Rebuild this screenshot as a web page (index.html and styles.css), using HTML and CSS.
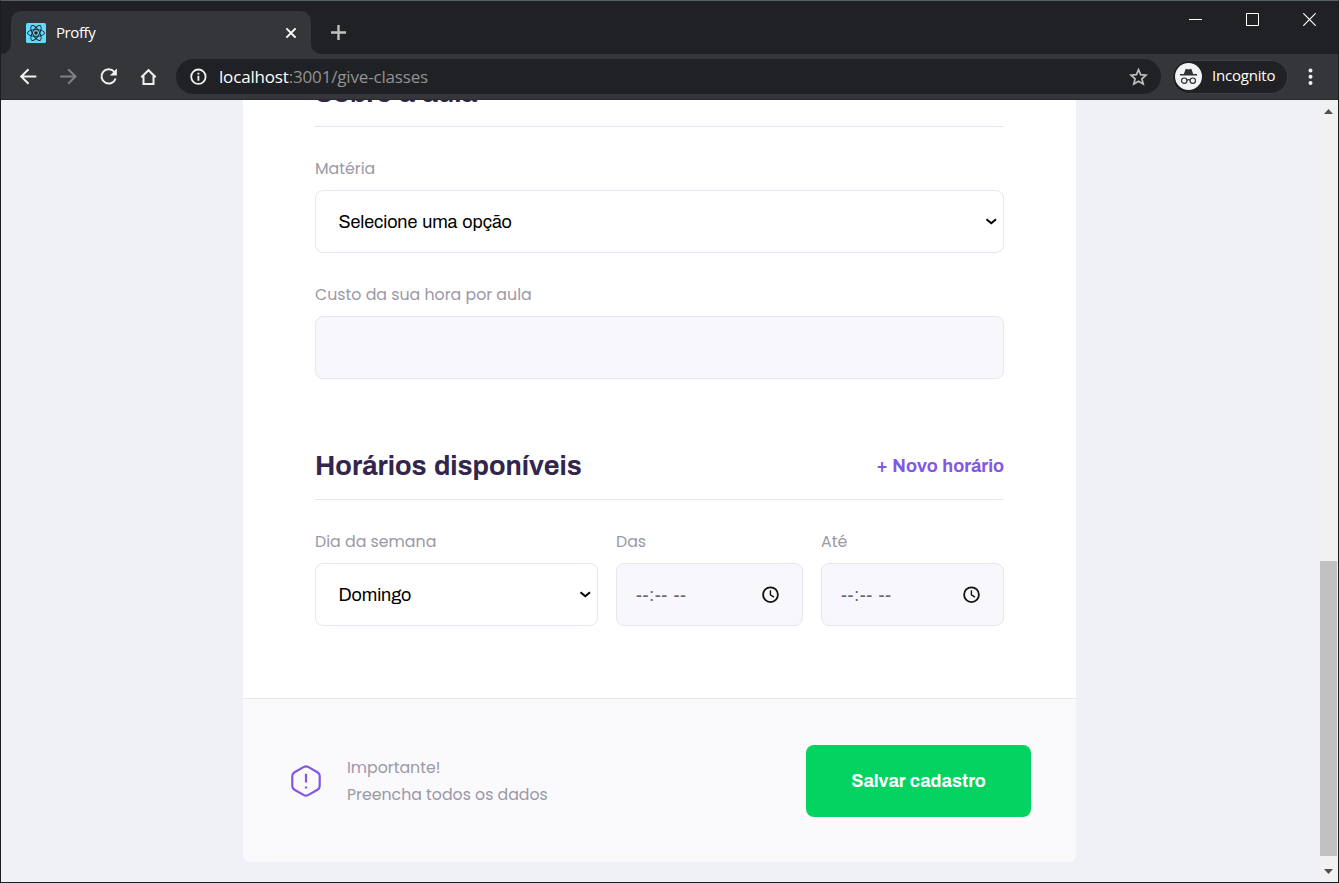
FILE: index.html
```html
<!DOCTYPE html>
<html lang="pt-BR">
<head>
<meta charset="utf-8">
<title>Proffy</title>
<link rel="stylesheet" href="styles.css">
</head>
<body>
<div class="window">
  <header class="titlebar">
    <div class="tab-foot"><i></i></div>
    <div class="tab">
      <svg class="favicon" width="20" height="20" viewBox="0 0 20 20"><rect width="20" height="20" rx="1.5" fill="#61dafb"/><g fill="none" stroke="#20232a" stroke-width=".9"><ellipse cx="10" cy="10" rx="8.5" ry="3.4"/><ellipse cx="10" cy="10" rx="8.5" ry="3.4" transform="rotate(60 10 10)"/><ellipse cx="10" cy="10" rx="8.5" ry="3.4" transform="rotate(120 10 10)"/></g><circle cx="10" cy="10" r="1.8" fill="#20232a"/></svg>
      <span class="tab-title">Proffy</span>
      <svg class="tab-close" width="12" height="12" viewBox="0 0 12 12"><path d="M1.4 1.4l9.2 9.2M10.6 1.4l-9.2 9.2" stroke="#fff" stroke-width="2"/></svg>
    </div>
    <div class="tab-foot right"><i></i></div>
    <svg class="new-tab" width="15" height="15" viewBox="0 0 15 15"><path d="M7.5 0v15M0 7.5h15" stroke="#bfc0c1" stroke-width="2.4"/></svg>
    <div class="win-controls">
      <svg width="13" height="13" viewBox="0 0 13 13"><path d="M0 6.5h13" stroke="#fff"/></svg>
      <svg width="13" height="13" viewBox="0 0 13 13"><path d="M.5.5h12v12H.5z" fill="none" stroke="#fff"/></svg>
      <svg width="13" height="13" viewBox="0 0 13 13"><path d="M.3.3l12.4 12.4M12.7.3L.3 12.7" stroke="#fff" stroke-width="1.2"/></svg>
    </div>
  </header>
  <div class="toolbar">
    <div class="nav">
      <svg width="20" height="20" viewBox="0 0 20 20" fill="none" stroke="#f1f1f2" stroke-width="2"><path d="M18.3 9.5H3.5M10.5 2.2L3.2 9.5l7.3 7.3"/></svg>
      <svg width="20" height="20" viewBox="0 0 20 20" fill="none" stroke="#808184" stroke-width="2"><path d="M2.2 9.5H17M10.2 2.2l7.3 7.3-7.3 7.3"/></svg>
      <svg width="20" height="20" viewBox="0 0 20 20" fill="none"><path d="M16.2 4.7A7.2 7.2 0 1 0 17.6 11.5" stroke="#f1f1f2" stroke-width="2"/><path d="M18.9 1.5v7h-7z" fill="#f1f1f2"/></svg>
      <svg width="20" height="20" viewBox="0 0 20 20" fill="none" stroke="#f1f1f2" stroke-width="2"><path d="M3.3 10.3L10.5 3.2l7.2 7.1M5.5 9v8h10V9"/></svg>
    </div>
    <div class="omnibox">
      <svg width="18" height="18" viewBox="0 0 18 18"><circle cx="9.4" cy="8.7" r="7.2" fill="none" stroke="#f1f1f2" stroke-width="1.8"/><path d="M9.4 7.7v5M9.4 4.7v1.9" stroke="#f1f1f2" stroke-width="1.9"/></svg>
      <p class="url"><b>localhost</b>:3001/give-classes</p>
      <svg class="star" width="20" height="20" viewBox="0 0 20 20"><path d="M10.5 2.7l2.1 5 5.4.5-4.1 3.6 1.3 5.3-4.7-2.8-4.7 2.8 1.3-5.3L3 8.200l5.400-.5z" fill="none" stroke="#bdbec0" stroke-width="1.7"/></svg>
    </div>
    <div class="incognito">
      <svg width="27" height="27" viewBox="0 0 27 27"><circle cx="13.5" cy="13.5" r="13.5" fill="#f1f3f4"/><path d="M8.8 11l2-5.2 2.7.7 2.8-.7 1.9 5.2zM5 11h17v1.5H5z" fill="#303136"/><g fill="none" stroke="#303136" stroke-width="1.2"><circle cx="9.2" cy="17.7" r="2.7"/><circle cx="17.8" cy="17.7" r="2.7"/><path d="M11.9 17.2q1.6-1 3.2 0"/></g></svg>
      <span>Incognito</span>
    </div>
    <svg class="kebab" width="5" height="18" viewBox="0 0 5 18" fill="#f1f1f2"><circle cx="2.5" cy="2.5" r="2"/><circle cx="2.5" cy="8.8" r="2"/><circle cx="2.5" cy="15" r="2"/></svg>
  </div>
  <div class="viewport">
    <div class="page">
      <main class="card">
        <form class="fields">
          <h2 class="legend cut"><span>Sobre a aula</span></h2>
          <label class="label">Matéria</label>
          <div class="control select"><span>Selecione uma opção</span><svg width="12" height="8" viewBox="0 0 12 8"><path d="M1.5 1.2L6.3 5.2l4.7-4" fill="none" stroke="#000" stroke-width="2"/></svg></div>
          <label class="label">Custo da sua hora por aula</label>
          <div class="control input"></div>
          <h2 class="legend schedule"><span>Horários disponíveis</span><button type="button" class="add">+ Novo horário</button></h2>
          <div class="row">
            <div><label class="label">Dia da semana</label><div class="control select"><span>Domingo</span><svg width="12" height="8" viewBox="0 0 12 8"><path d="M1.5 1.2L6.3 5.2l4.7-4" fill="none" stroke="#000" stroke-width="2"/></svg></div></div>
            <div><label class="label">Das</label><div class="control input time"><span>--:-- --</span><svg width="18" height="18" viewBox="0 0 18 18" fill="none" stroke="#111"><circle cx="9.5" cy="8.7" r="7.4" stroke-width="1.8"/><path d="M9.4 4.2v4.6l3.6 2.4" stroke-width="1.4"/></svg></div></div>
            <div><label class="label">Até</label><div class="control input time"><span>--:-- --</span><svg width="18" height="18" viewBox="0 0 18 18" fill="none" stroke="#111"><circle cx="9.5" cy="8.7" r="7.4" stroke-width="1.8"/><path d="M9.4 4.2v4.6l3.6 2.4" stroke-width="1.4"/></svg></div></div>
          </div>
        </form>
        <footer class="footer">
          <svg width="32" height="32" viewBox="0 0 32 32" fill="none" stroke="#8257e5" stroke-width="2.2"><path d="M13.5 2.1Q16 .7 18.5 2.1L27.500 7.300Q29.700 8.600 29.700 11v10q0 2.400-2.200 3.700l-9 5.200q-2.500 1.400-5 0l-9-5.200Q2.300 23.400 2.300 21V11q0-2.400 2.200-3.700z"/><path d="M16 8.800v8.800M16 21.500v2"/></svg>
          <p class="note">Importante!<br>Preencha todos os dados</p>
          <button type="button" class="save">Salvar cadastro</button>
        </footer>
      </main>
    </div>
    <div class="scrollbar">
      <svg width="9" height="5" viewBox="0 0 9 5"><path d="M0 5L4.5 0 9 5z" fill="#505050"/></svg>
      <i class="thumb"></i>
      <svg width="9" height="5" viewBox="0 0 9 5"><path d="M0 0l4.5 5L9 0z" fill="#505050"/></svg>
    </div>
  </div>
</div>
</body>
</html>
```
FILE: styles.css
```css
* { box-sizing: border-box; margin: 0; padding: 0; }
body { width: 1339px; height: 883px; overflow: hidden; font-family: "Poppins", "Lato", sans-serif; }
svg { display: block; flex: none; }
button { border: 0; background: none; }
.window { height: 883px; display: flex; flex-direction: column; border: 1px solid #1c1d20; border-top-color: #566164; }
.titlebar { height: 53px; background: #202124; display: flex; align-items: flex-end; }
.tab { width: 300px; height: 43px; background: #35363a; border-radius: 10px 10px 0 0; display: flex; align-items: center; padding: 0 14px 0 15px; }
.tab-title { color: #fff; font: 15px "Open Sans", sans-serif; letter-spacing: -.4px; margin-left: 10px; padding-bottom: 2px; }
.tab-close { margin-left: auto; }
.tab-foot { width: 10px; height: 10px; background: #35363a; }
.tab-foot i { display: block; height: 10px; background: #202124; border-bottom-right-radius: 10px; }
.tab-foot.right i { border-radius: 0 0 0 10px; }
.new-tab { margin: 0 0 14px 10px; }
.win-controls { margin: 0 22px 28px auto; display: flex; gap: 44px; }
.toolbar { height: 46px; background: #35363a; border-bottom: 1px solid #292a2d; display: flex; align-items: center; }
.nav { display: flex; gap: 20px; margin-left: 17px; }
.omnibox { margin-left: 18px; width: 985px; height: 35px; border-radius: 18px; background: #202124; display: flex; align-items: center; padding: 0 13px; }
.url { font: 17px "Open Sans", sans-serif; color: #919295; margin-left: 12px; letter-spacing: -.17px; }
.url b { font-weight: 400; color: #fff; }
.star { margin-left: auto; }
.incognito { margin-left: 11px; width: 116px; height: 34px; border-radius: 17px; border: 1px solid #3e3f43; background: #202124; display: flex; align-items: center; padding-left: 2px; color: #fff; font: 15px "Open Sans", sans-serif; letter-spacing: -.2px; }
.incognito span { margin-left: 10px; padding-bottom: 3px; }
.kebab { margin-left: 20px; }
.viewport { flex: 1; min-height: 0; display: flex; background: #f0f0f7; }
.page { flex: 1; padding-left: 242px; overflow: hidden; }
.card { width: 833px; background: #fff; border-radius: 0 0 8px 8px; overflow: hidden; }
.fields { height: 598px; padding: 0 72px; }
.legend { display: flex; justify-content: space-between; align-items: center; border-bottom: 1px solid #e6e6f0; color: #32264d; font: 700 27px/38px "Archivo", "Liberation Sans", Arial, sans-serif; word-spacing: 2px; }
.cut { height: 27px; align-items: flex-end; }
.cut span { line-height: 38px; padding-bottom: 14px; }
.schedule { height: 51px; margin-top: 70px; padding-bottom: 16px; }
.add { color: #8257e5; font: 700 18px "Archivo", "Liberation Sans", Arial, sans-serif; word-spacing: 1px; }
.label { display: block; height: 63px; padding-top: 28px; font-size: 15.8px; line-height: 27px; color: #9c98a6; white-space: nowrap; }
.control { height: 63px; border: 1px solid #e6e6f0; border-radius: 8px; background: #fff; display: flex; align-items: center; justify-content: space-between; color: #000; font: 18px "Archivo", "Liberation Sans", Arial, sans-serif; letter-spacing: -.1px; word-spacing: 1.4px; }
.select { padding: 0 6px 0 22.5px; }
.input { background: #f8f8fc; }
.time { padding: 0 23px 0 19px; color: #6a6180; letter-spacing: .5px; word-spacing: 1.5px; }
.row { display: grid; grid-template-columns: 283px 187px 183px; column-gap: 18px; }
.footer { height: 164px; border-top: 1px solid #e6e6f0; background: #fafafc; display: flex; align-items: center; padding: 0 45px 0 47px; }
.note { margin-left: 25px; color: #9c98a6; font-size: 15.75px; line-height: 27px; }
.save { margin-left: auto; width: 225px; height: 72px; border-radius: 8px; background: #04d361; color: #fff; font: 700 18px "Archivo", "Liberation Sans", Arial, sans-serif; word-spacing: 1px; }
.scrollbar { width: 19px; background: #f1f1f1; display: flex; flex-direction: column; align-items: center; padding: 9px 0 8px; }
.thumb { width: 17px; height: 295px; background: #c1c1c1; margin: auto 0 13px; }
```
